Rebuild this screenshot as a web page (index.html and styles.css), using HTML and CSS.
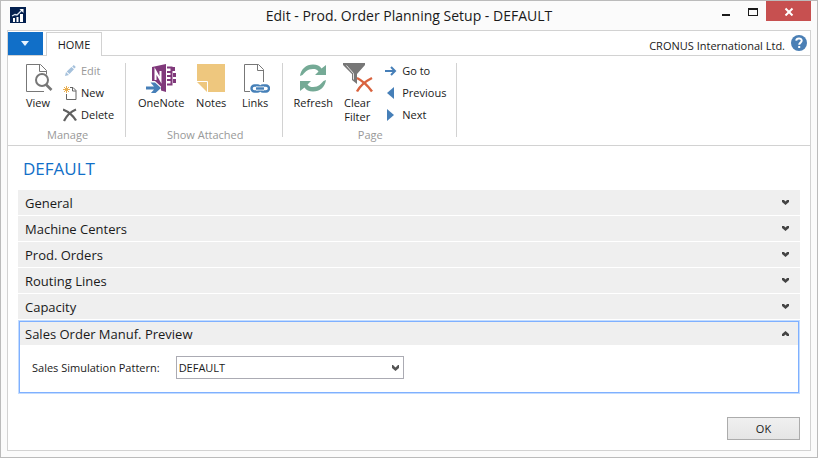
FILE: index.html
```html
<!DOCTYPE html>
<html lang="en">
<head>
<meta charset="utf-8">
<title>Edit - Prod. Order Planning Setup - DEFAULT</title>
<link rel="stylesheet" href="styles.css">
</head>
<body>
<div class="window">
  <header class="titlebar">
    <svg class="app-icon" width="16" height="16" viewBox="0 0 16 16"><rect width="16" height="16" fill="#03204f"/><path d="M3 11h2v4H3zM6.500 10h2v5h-2zM10 7h3v8h-3z" fill="#fff"/><path d="M2 9l3-1.500 2 .5 5-5" fill="none" stroke="#dce6f2" stroke-width="1.300"/><path d="M9.500 2h4v4z" fill="#fff"/></svg>
    <h1 class="title">Edit - Prod. Order Planning Setup - DEFAULT</h1>
    <div class="window-controls">
      <button class="control" aria-label="Minimize"><svg width="10" height="10"><path d="M1 8h8v2H1z" fill="#1a1a1a"/></svg></button>
      <button class="control" aria-label="Maximize"><svg width="10" height="10"><path d="M0 2h10v8H0zM1 4v5h8V4z" fill="#1a1a1a" fill-rule="evenodd"/></svg></button>
      <button class="control close" aria-label="Close"><svg width="10" height="10"><path d="M1.500 2.500l7 7M8.500 2.500l-7 7" stroke="#fff" stroke-width="2"/></svg></button>
    </div>
  </header>
  <div class="client">
    <nav class="tabs">
      <button class="app-menu" aria-label="Application menu"><svg width="9" height="5"><path d="M0 0h8L4 5z" fill="#e8f4ff"/></svg></button>
      <button class="tab">HOME</button>
      <span class="company">CRONUS International Ltd.</span>
      <button class="help" aria-label="Help"><svg width="16" height="16" viewBox="0 0 16 16"><circle cx="8" cy="8" r="8" fill="#4a7fb5"/><path d="M5.200 5.600C5.500 2.600 10.800 2.700 10.700 5.800c0 1.900-2.500 1.800-2.500 4" fill="none" stroke="#fff" stroke-width="2"/><path d="M7.200 11h2v2h-2z" fill="#fff"/></svg></button>
    </nav>
    <div class="ribbon">
      <section class="group">
        <div class="actions">
          <button class="big"><svg width="30" height="30" viewBox="0 0 30 30"><path d="M21 28.500H3.500V1.500h14l6 6v4M16.500 1.500v7h7" fill="none" stroke="#777"/><circle cx="19" cy="17" r="6" fill="#fff" stroke="#777" stroke-width="2"/><path d="M23 21.500l5.500 5.500" stroke="#777" stroke-width="2.600"/></svg>View</button>
          <div class="stack">
            <button class="small muted"><svg width="14" height="14" viewBox="0 0 14 14"><path d="M2 12l1-4 3 3zM3.700 7.500L8.500 3 11 5.200 6.500 10zM9.200 2.400l1.600-1.400 2 2-1.400 1.600z" fill="#a5c1dc"/></svg>Edit</button>
            <button class="small"><svg width="14" height="14" viewBox="0 0 14 14"><path d="M7 1.500h3l3 3v9H3.500V8M9.500 1.500v3.500H13" fill="none" stroke="#666"/><path d="M3.500 0v7M0 3.500h7M1 1l5 5M6 1L1 6" stroke="#e9ae50"/></svg>New</button>
            <button class="small"><svg width="14" height="14" viewBox="0 0 14 14"><path d="M0 1.500c5 2 10 6 13 11M13 1.500C9 3 4 7 1 13" fill="none" stroke="#606060" stroke-width="2.300"/></svg>Delete</button>
          </div>
        </div>
        <h2 class="group-name">Manage</h2>
      </section>
      <section class="group">
        <div class="actions">
          <button class="big wide"><svg width="32" height="30" viewBox="0 0 32 30"><path d="M7 4l14-3v28l-5-1.500v-4L10 18H7z" fill="#80397b"/><path d="M22 4.500h4.500v17H22M22 9h4M22 13h4M22 17h4" fill="none" stroke="#80397b" stroke-width="2"/><path d="M26 4h4v4h-4zM28 10h3v4h-3zM28 16h3v4h-3z" fill="#80397b"/><path d="M10.500 17V8l5 9V8" fill="none" stroke="#fff" stroke-width="2"/><path d="M1 23.500h8L5.500 19.500H10l6 5.500-6 5.500H5.500L9 26.500H1z" fill="#467fb8"/></svg>OneNote</button>
          <button class="big wide"><svg width="28" height="30" viewBox="0 0 28 30"><path d="M0 1h28v28H10L0 19z" fill="#eec77e"/><path d="M0 18.500h10.500V29" fill="none" stroke="#fff"/></svg>Notes</button>
          <button class="big links"><svg width="30" height="30" viewBox="0 0 30 30"><path d="M10 28.500H4.500V1.500h14l5 5V19M17.500 1.500v6h6" fill="none" stroke="#777"/><g fill="none" stroke="#4680b8" stroke-width="2.400"><rect x="11.500" y="22.500" width="9" height="6" rx="3"/><rect x="20" y="22.500" width="9" height="6" rx="3"/><path d="M16 25.500h8" stroke="#fff" stroke-width="4"/><path d="M16 25.500h8"/></g></svg>Links</button>
        </div>
        <h2 class="group-name">Show Attached</h2>
      </section>
      <section class="group page-group">
        <div class="actions">
          <button class="big medium"><svg width="28" height="30" viewBox="0 0 28 30"><g fill="#75aa96"><path d="M1 13C2 6 7 1.500 14 1.500c4 0 7 1.500 8.500 4L27 2v10H16l3.500-3.500C18 6.500 16.500 6 14 6 8 6 6 9.500 3.500 12z"/><path transform="rotate(180 14 15)" d="M1 13C2 6 7 1.500 14 1.500c4 0 7 1.500 8.500 4L27 2v10H16l3.500-3.500C18 6.500 16.500 6 14 6 8 6 6 9.500 3.500 12z"/></g></svg>Refresh</button>
          <button class="big medium"><svg width="32" height="30" viewBox="0 0 32 30"><path d="M2 0h22v2l-8 9v10l-5-4v-6L2 2z" fill="#777"/><path d="M5.500 2.500l7 8v6" fill="none" stroke="#e4e4e4"/><path d="M16 15c6 3 11 8 15 13.500M31 15c-6 3-12 8-15 13.500" fill="none" stroke="#d9633f" stroke-width="2.500"/></svg>Clear<br>Filter</button>
          <div class="stack">
            <button class="small"><svg width="14" height="14" viewBox="0 0 14 14"><path d="M1 7h10M7 3l4 4-4 4" fill="none" stroke="#467fb8" stroke-width="2"/></svg>Go to</button>
            <button class="small"><svg width="14" height="14" viewBox="0 0 14 14"><path d="M10 1v12L3 7z" fill="#467fb8"/></svg>Previous</button>
            <button class="small"><svg width="14" height="14" viewBox="0 0 14 14"><path d="M3 1v12l7-6z" fill="#467fb8"/></svg>Next</button>
          </div>
        </div>
        <h2 class="group-name">Page</h2>
      </section>
    </div>
    <main class="page">
      <h2 class="page-title">DEFAULT</h2>
      <div class="tabs-list">
        <button class="fasttab">General<svg width="7" height="5"><path d="M0 0h2l1.500 1.500L5 0h2v2L3.500 5 0 2z" fill="#444"/></svg></button>
        <button class="fasttab">Machine Centers<svg width="7" height="5"><path d="M0 0h2l1.500 1.500L5 0h2v2L3.500 5 0 2z" fill="#444"/></svg></button>
        <button class="fasttab">Prod. Orders<svg width="7" height="5"><path d="M0 0h2l1.500 1.500L5 0h2v2L3.500 5 0 2z" fill="#444"/></svg></button>
        <button class="fasttab">Routing Lines<svg width="7" height="5"><path d="M0 0h2l1.500 1.500L5 0h2v2L3.500 5 0 2z" fill="#444"/></svg></button>
        <button class="fasttab">Capacity<svg width="7" height="5"><path d="M0 0h2l1.500 1.500L5 0h2v2L3.500 5 0 2z" fill="#444"/></svg></button>
        <section class="open-tab">
          <button class="fasttab">Sales Order Manuf. Preview<svg width="7" height="5"><path d="M0 5h2l1.500-1.500L5 5h2V3L3.500 0 0 3z" fill="#444"/></svg></button>
          <div class="field">
            <label for="pattern">Sales Simulation Pattern:</label>
            <div class="select-box">
              <select id="pattern"><option>DEFAULT</option></select>
              <svg class="select-arrow" width="7" height="6"><path d="M0 0h1l2.500 2.500L6 0h1v3L3.500 6 0 3z" fill="#555"/></svg>
            </div>
          </div>
        </section>
      </div>
      <footer class="footer"><button class="ok">OK</button></footer>
    </main>
  </div>
</div>
</body>
</html>
```
FILE: styles.css
```css
* { box-sizing: border-box; }
body {
  margin: 0;
  font: 11px/14px "Open Sans", "Noto Sans", sans-serif;
  color: #1a1a1a;
}
button {
  margin: 0;
  padding: 0;
  border: 0;
  background: none;
  color: inherit;
  font: inherit;
}
h1, h2 { margin: 0; font-weight: 400; }
svg { display: block; flex: none; }

.window {
  min-height: 100vh;
  display: flex;
  flex-direction: column;
  padding: 0 6px;
  border: 1px solid #bbb;
  background: #fbfbfb;
}
.titlebar {
  display: grid;
  grid-template-columns: 1fr auto 1fr;
  height: 29px;
}
.app-icon { margin: 6px 0 0 3px; }
.title {
  font-size: 14px;
  line-height: 29px;
}
.window-controls {
  display: flex;
  justify-content: flex-end;
  align-items: flex-start;
}
.control {
  display: flex;
  align-items: center;
  justify-content: center;
  width: 27px;
  height: 20px;
}
.close { width: 45px; background: #c75050; }

.client {
  flex: 1;
  display: flex;
  flex-direction: column;
  margin-bottom: 6px;
  border: 1px solid #d2d2d2;
  background: #fff;
}
.tabs {
  display: flex;
  height: 25px;
  border-bottom: 1px solid #d2d2d2;
}
.app-menu {
  display: flex;
  align-items: center;
  justify-content: center;
  width: 35px;
  margin: 1px 3px 0 0;
  background: #116fc8;
}
.tab {
  width: 56px;
  height: 24px;
  margin-top: 1px;
  border: 1px solid #d2d2d2;
  border-bottom: 0;
  background: #fff;
}
.company { margin: 8px 6px 0 auto; }
.help { align-self: center; margin-right: 3px; }

.ribbon {
  display: flex;
  height: 90px;
  padding: 7px 0 8px;
  border-bottom: 1px solid #d2d2d2;
}
.group {
  display: flex;
  flex-direction: column;
  justify-content: space-between;
  padding: 0 8px 0 10px;
  border-right: 1px solid #d2d2d2;
}
.page-group { padding: 0 7px 0 8px; }
.group-name {
  color: #999;
  font-size: 11px;
  line-height: 5px;
  text-align: center;
}
.actions { display: flex; height: 66px; }
.big {
  display: flex;
  flex-direction: column;
  align-items: center;
  width: 40px;
  line-height: 14px;
}
.big svg { margin-bottom: 3px; }
.wide { width: 50px; }
.medium { width: 44px; }
.links { width: 38px; }
.stack {
  display: flex;
  flex-direction: column;
  margin-left: 5px;
}
.small {
  display: flex;
  align-items: center;
  gap: 4px;
  height: 22px;
  padding: 0 3px 6px 0;
}
.muted { color: #999; }

.page {
  flex: 1;
  display: flex;
  flex-direction: column;
  padding: 12px 10px 10px;
}
.page-title {
  padding-left: 5px;
  color: #116fc8;
  font-size: 17px;
  line-height: 22px;
}
.tabs-list {
  display: flex;
  flex-direction: column;
  gap: 1px;
  margin-top: 10px;
}
.fasttab {
  display: flex;
  align-items: center;
  justify-content: space-between;
  width: 100%;
  height: 25px;
  padding: 0 11px 0 7px;
  background: #efefef;
  font-size: 13px;
}
.open-tab {
  border: 1px solid #7fb0ff;
  outline: 1px solid #c3dcff;
  margin: 1px;
  height: 72px;
}
.open-tab .fasttab { height: 23px; padding: 0 9px 0 5px; }
.field {
  display: flex;
  align-items: center;
  gap: 16px;
  padding: 11px 12px;
}
.select-box { position: relative; width: 228px; }
.select-box select {
  display: block;
  width: 100%;
  height: 23px;
  padding: 0 2px;
  border: 1px solid #ababb3;
  border-radius: 0;
  background: #fff;
  color: inherit;
  font: inherit;
  appearance: none;
}
.select-arrow {
  position: absolute;
  right: 5px;
  top: 9px;
  pointer-events: none;
}
.footer {
  display: flex;
  justify-content: flex-end;
  margin-top: auto;
}
.ok {
  width: 73px;
  height: 23px;
  border: 1px solid #acacac;
  background: linear-gradient(#f0f0f0, #e5e5e5);
}
```
